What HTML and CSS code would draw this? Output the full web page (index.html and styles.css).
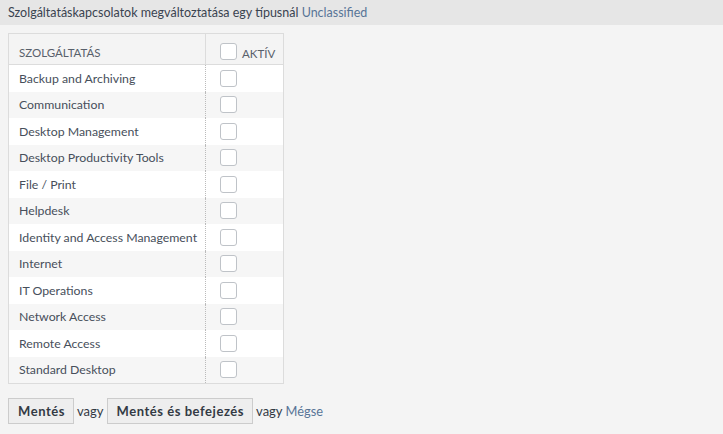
FILE: index.html
```html
<!DOCTYPE html>
<html lang="hu">
<head>
<meta charset="utf-8">
<title>Szolgáltatáskapcsolatok</title>
<link rel="stylesheet" href="styles.css">
</head>
<body>
<div class="header">Szolgáltatáskapcsolatok megváltoztatása egy típusnál <span class="link">Unclassified</span></div>
<div class="content">
  <table class="grid">
    <thead>
      <tr>
        <th class="name">Szolgáltatás</th>
        <th class="active"><span class="cb"></span>Aktív</th>
      </tr>
    </thead>
    <tbody>
      <tr><td class="name">Backup and Archiving</td><td class="active"><span class="cb"></span></td></tr>
      <tr><td class="name">Communication</td><td class="active"><span class="cb"></span></td></tr>
      <tr><td class="name">Desktop Management</td><td class="active"><span class="cb"></span></td></tr>
      <tr><td class="name">Desktop Productivity Tools</td><td class="active"><span class="cb"></span></td></tr>
      <tr><td class="name">File / Print</td><td class="active"><span class="cb"></span></td></tr>
      <tr><td class="name">Helpdesk</td><td class="active"><span class="cb"></span></td></tr>
      <tr><td class="name">Identity and Access Management</td><td class="active"><span class="cb"></span></td></tr>
      <tr><td class="name">Internet</td><td class="active"><span class="cb"></span></td></tr>
      <tr><td class="name">IT Operations</td><td class="active"><span class="cb"></span></td></tr>
      <tr><td class="name">Network Access</td><td class="active"><span class="cb"></span></td></tr>
      <tr><td class="name">Remote Access</td><td class="active"><span class="cb"></span></td></tr>
      <tr><td class="name">Standard Desktop</td><td class="active"><span class="cb"></span></td></tr>
    </tbody>
  </table>
  <div class="actions">
    <button class="btn">Mentés</button>
    <span class="sep">vagy</span>
    <button class="btn">Mentés és befejezés</button>
    <span class="sep">vagy</span>
    <span class="link cancel">Mégse</span>
  </div>
</div>
</body>
</html>
```
FILE: styles.css
```css
html, body {
  margin: 0;
  padding: 0;
  background: #f4f4f4;
  font-family: "Lato", "Open Sans", sans-serif;
  font-size: 12.5px;
  color: #474f5b;
}
.header {
  height: 25px;
  line-height: 25px;
  background: #e6e6e6;
  padding: 0 8px;
  color: #3a4350;
}
.link {
  color: #587597;
}
.content {
  padding: 8px 8px 0 8px;
}
.grid {
  border-collapse: collapse;
  border: 1px solid #dcdcdc;
  width: 276px;
  table-layout: fixed;
}
.grid th {
  height: 25px;
  padding: 0 10px 5px 10px;
  text-align: left;
  vertical-align: bottom;
  font-weight: normal;
  font-size: 11.5px;
  text-transform: uppercase;
  color: #58606b;
  background: #f4f4f4;
  border-bottom: 1px solid #dcdcdc;
  white-space: nowrap;
}
.grid th.name {
  width: 176px;
}
.grid th.active {
  border-left: 1px solid #dcdcdc;
  padding-left: 14px;
  padding-right: 0;
  padding-bottom: 4px;
}
.grid th .cb {
  vertical-align: -2px;
  margin-right: 5px;
}
.grid td {
  height: 26.5px;
  padding: 0 10px;
  white-space: nowrap;
  font-size: 12.3px;
}
.grid tbody tr:nth-child(odd) td {
  background: #fff;
}
.grid tbody tr:nth-child(even) td {
  background: #f6f6f6;
}
.grid td.active {
  border-left: 1px dotted #bbb;
  padding-left: 14px;
}
.cb {
  display: inline-block;
  width: 15px;
  height: 15px;
  border: 1px solid #bfc3c8;
  border-radius: 3px;
  background: #fff;
  vertical-align: middle;
}
.actions {
  display: flex;
  align-items: center;
  gap: 3px;
  margin-top: 14px;
  font-size: 13px;
}
.btn {
  font-family: inherit;
  font-size: 13px;
  font-weight: bold;
  letter-spacing: 0.55px;
  color: #333a44;
  background: #eee;
  border: 1px solid #ccc;
  height: 26px;
  padding: 0 8px 0 9px;
  margin: 0;
}
.sep {
  color: #333a44;
}
.cancel {
  font-size: 12.8px;
}
```
